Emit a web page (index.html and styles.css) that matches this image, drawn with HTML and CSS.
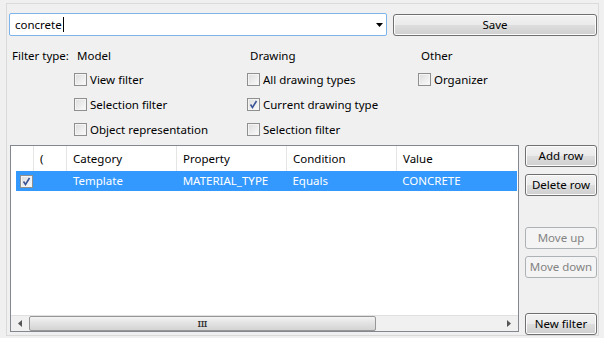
FILE: index.html
```html
<!DOCTYPE html>
<html>
<head>
<meta charset="utf-8">
<link rel="stylesheet" href="styles.css">
</head>
<body>
<div class="frame">
  <div class="top">
    <div class="combo">
      <span class="combo-text">concrete</span><span class="caret"></span>
      <svg class="arrow" width="7" height="4" viewBox="0 0 7 4"><path d="M0 0h7L3.5 4z" fill="#000"/></svg>
    </div>
    <button class="btn save">Save</button>
  </div>
  <div class="filters">
    <div class="lbl">Filter type:</div>
    <div class="hdr">Model</div>
    <div class="hdr">Drawing</div>
    <div class="hdr">Other</div>

    <div></div>
    <label class="cb"><span class="box"></span>View filter</label>
    <label class="cb"><span class="box"></span>All drawing types</label>
    <label class="cb"><span class="box"></span>Organizer</label>

    <div></div>
    <label class="cb"><span class="box"></span>Selection filter</label>
    <label class="cb"><span class="box on"><svg width="9" height="9" viewBox="0 0 9 9"><path d="M1.5 4.5l2 3l4-6.5" fill="none" stroke="#3b5499" stroke-width="1.6"/></svg></span>Current drawing type</label>
    <div></div>

    <div></div>
    <label class="cb"><span class="box"></span>Object representation</label>
    <label class="cb"><span class="box"></span>Selection filter</label>
    <div></div>
  </div>
  <div class="main">
    <div class="table">
      <div class="thead">
        <div class="c c0"></div>
        <div class="c c1">(</div>
        <div class="c c2">Category</div>
        <div class="c c3">Property</div>
        <div class="c c4">Condition</div>
        <div class="c c5">Value</div>
      </div>
      <div class="row sel">
        <div class="c c0"><span class="box on small"><svg width="9" height="9" viewBox="0 0 9 9"><path d="M1.5 4.5l2 3l4-6.5" fill="none" stroke="#3b5499" stroke-width="1.6"/></svg></span></div>
        <div class="c c1"></div>
        <div class="c c2">Template</div>
        <div class="c c3">MATERIAL_TYPE</div>
        <div class="c c4">Equals</div>
        <div class="c c5">CONCRETE</div>
      </div>
      <div class="fill"></div>
      <div class="hscroll">
        <div class="sarrow"><svg width="4" height="7" viewBox="0 0 4 7"><path d="M4 0v7L0 3.5z" fill="#555"/></svg></div>
        <div class="thumb"><span class="grip">III</span></div>
        <div class="track"></div>
        <div class="sarrow"><svg width="4" height="7" viewBox="0 0 4 7"><path d="M0 0v7L4 3.5z" fill="#555"/></svg></div>
      </div>
    </div>
    <div class="side">
      <button class="btn">Add row</button>
      <button class="btn">Delete row</button>
      <button class="btn dis first-dis">Move up</button>
      <button class="btn dis">Move down</button>
      <button class="btn last">New filter</button>
    </div>
  </div>
</div>
</body>
</html>
```

FILE: styles.css
```css
* { box-sizing: border-box; }
html, body { margin: 0; padding: 0; }
body {
  background: #f0f0f0;
  font-family: "Noto Sans", "Open Sans", sans-serif;
  font-size: 11.5px;
  color: #000;
  width: 604px;
  height: 338px;
  overflow: hidden;
}
.frame {
  margin: 3px 6px 0 6px;
  width: 593px;
  height: 333px;
  border: 1px solid #dadada;
  background: #f0f0f0;
  display: flex;
  flex-direction: column;
}
.top {
  display: flex;
  gap: 6px;
  padding: 9px 0 0 2px;
  align-items: flex-start;
}
.combo {
  width: 378px;
  height: 23px;
  border: 1px solid #7eb4ea;
  border-radius: 2px;
  background: #fff;
  display: flex;
  align-items: center;
  padding-left: 5px;
  position: relative;
}
.combo-text { line-height: 14px; }
.caret {
  display: inline-block;
  width: 1px;
  height: 15px;
  background: #000;
  margin-left: 1px;
}
.arrow { position: absolute; right: 3px; top: 9px; }
.btn {
  font-family: inherit;
  font-size: 11.5px;
  color: #000;
  height: 22px;
  border: 1px solid #707070;
  border-radius: 3px;
  background: linear-gradient(#f2f2f2 0%, #ebebeb 48%, #dddddd 52%, #cfcfcf 100%);
  box-shadow: inset 0 0 0 1px #fcfcfc;
  padding: 0;
  line-height: 18px;
}
.save { width: 204px; margin-top: 1px; }
.filters {
  display: grid;
  grid-template-columns: 62px 173px 171px 1fr;
  grid-template-rows: 24px 25px 25px 25px;
  padding: 7px 0 0 5px;
  align-items: center;
}
.hdr { padding-left: 3px; }
.cb {
  display: flex;
  align-items: center;
  gap: 3px;
  white-space: nowrap;
}
.box {
  width: 13px;
  height: 13px;
  border: 1px solid #8e8f8f;
  background: linear-gradient(135deg, #dcdcdc, #fbfbfb);
  box-shadow: inset 0 0 0 1px #f4f4f4;
  display: inline-flex;
  align-items: center;
  justify-content: center;
  flex: none;
}
.main {
  display: flex;
  gap: 6px;
  padding: 3px 0 0 3px;
  flex: 1;
}
.table {
  width: 509px;
  height: 187px;
  border: 1px solid #828790;
  background: #fff;
  display: flex;
  flex-direction: column;
}
.thead, .row { display: flex; }
.thead { height: 25px; }
.thead .c {
  border-right: 1px solid #e5e5e5;
  line-height: 25px;
  padding-left: 6px;
}
.c0 { width: 23px; }
.c1 { width: 33px; }
.c2 { width: 110px; }
.c3 { width: 110px; }
.c4 { width: 110px; }
.c5 { width: 121px; border-right: none !important; }
.row {
  height: 20px;
  line-height: 20px;
  margin-left: 5px;
  margin-right: 1px;
}
.row .c { padding-left: 6px; }
.row .c0 { width: 18px; display: flex; align-items: center; padding-left: 4px; }
.sel { background: #3399ff; color: #fff; }
.fill { flex: 1; }
.hscroll {
  height: 16px;
  display: flex;
  background: #f0f0f0;
  border-top: 1px solid #e0e0e0;
}
.sarrow {
  width: 18px;
  display: flex;
  align-items: center;
  justify-content: center;
}
.thumb {
  width: 347px;
  border: 1px solid #979797;
  border-radius: 2px;
  background: linear-gradient(#f3f3f3, #e2e2e2 50%, #d4d4d4);
  display: flex;
  align-items: center;
  justify-content: center;
}
.grip { font-size: 8px; color: #333; font-weight: bold; line-height: 8px; }
.track { flex: 1; }
.side {
  width: 72px;
  display: flex;
  flex-direction: column;
}
.side .btn { width: 72px; margin-bottom: 7px; }
.side .first-dis { margin-top: 24px; }
.dis {
  color: #838383;
  border-color: #adb2b5;
  background: #f4f4f4;
  box-shadow: none;
}
.side .last { margin-top: auto; margin-bottom: 0; }
```
